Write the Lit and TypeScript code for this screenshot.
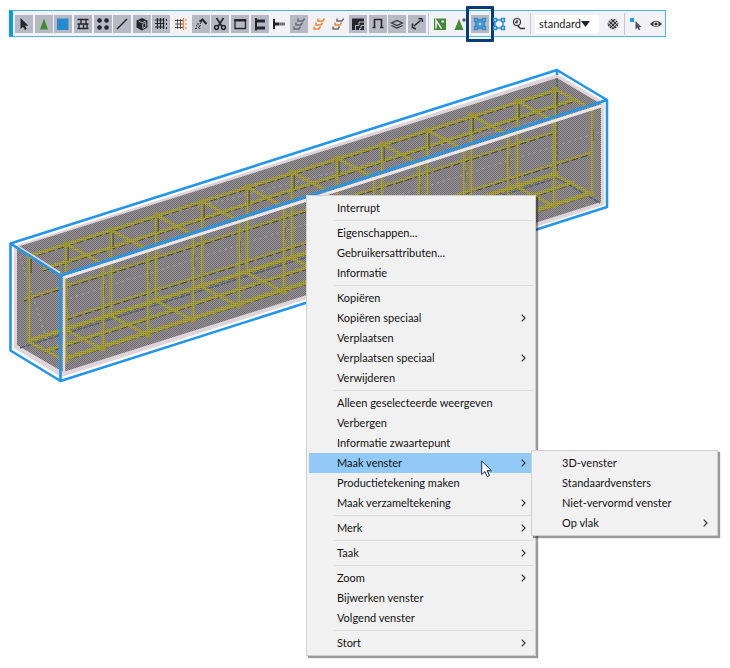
import { LitElement, html, svg, css, nothing } from "lit";
import { customElement } from "lit/decorators.js";
import { classMap } from "lit/directives/class-map.js";

interface Tool {
  label: string;
  icon: unknown;
  on?: boolean;
  marked?: boolean;
}

interface Entry {
  label: string;
  open?: boolean;
  more?: boolean;
  children?: Entry[];
}

const chainLinks = (top: string, middle: string, low: string) => svg`
  <g fill="none" stroke-width="1.5">
    <path d="M8 3.500v2.500h5l1.500-2.500" stroke=${top}/>
    <path d="M6 7.500v2.500h5l1.500-2.500" stroke=${middle}/>
    <path d="M4 11.500v2.500h5l1.500-2.500" stroke=${low}/>
  </g>`;

const nodeFrame = svg`
  <path d="M3.500 3.500h3v3h-3zM11.500 3.500h3v3h-3zM3.500 11.500h3v3h-3zM11.500 11.500h3v3h-3zM6.500 5h5M6.500 13h5M5 6.500v5M13 6.500v5" fill="none" stroke="#258bd0" stroke-width="1.400"/>`;

const mainTools: Tool[] = [
  { label: "Selecteren", on: true, icon: svg`<path d="M5.500 3v11l2.600-2.300 1.800 3.300 1.900-1-1.700-3.200 3.200-.4z" fill="#24262c"/>` },
  { label: "Componenten", on: true, icon: svg`<path d="M9 3.500l4 11H5z" fill="#438a35"/>` },
  { label: "Onderdelen", on: true, icon: svg`<path d="M3 3.500h11.500V15H3z" fill="#258bd0"/>` },
  { label: "Vlakken", on: true, icon: svg`<path d="M3.500 4.500h11M3.500 9h11M3.500 13.500h11M7 4.500V9M12 4.500V9M5 9v4.500M9.500 9v4.500M13 9v4.500" stroke="#24262c" stroke-width="1.400"/>` },
  { label: "Punten", on: true, icon: svg`<g fill="#24262c"><circle cx="5.500" cy="5.500" r="2.300"/><circle cx="12.500" cy="5.500" r="2.300"/><circle cx="5.500" cy="12.500" r="2.300"/><circle cx="12.500" cy="12.500" r="2.300"/></g>` },
  { label: "Lijnen", on: true, icon: svg`<path d="M4 14L14 4" stroke="#24262c" stroke-width="1.400"/>` },
  { label: "Volumes", on: true, icon: svg`<path d="M9 3l5.500 2.500v7L9 15.500l-5.500-3v-7z" fill="#24262c"/><path d="M5.500 6L9 7.700 12.800 6M9.800 9v4.500l3-1.800V7.500z" fill="none" stroke="#b6b9c4" stroke-width=".9"/>` },
  { label: "Stramien", on: true, icon: svg`<path d="M5.500 3v11M8.500 3v11M11.500 3v11M3 5h9.500M3 8.500h9.500M3 12h9.500" stroke="#24262c" stroke-width="1.200"/><path d="M14.500 4v11" stroke="#24262c" stroke-dasharray="2 2"/>` },
  { label: "Stramienlijn", icon: svg`<path d="M5.500 4v10M8.500 4v10M3 5.500h8M3 9h8M3 12.500h8" stroke="#4d4f58"/><path d="M11.500 3v12" stroke="#ef8536" stroke-width="1.400"/><path d="M14 4v10" stroke="#ef8536" stroke-dasharray="2 2"/>` },
  { label: "Lassen", on: true, icon: svg`<path d="M7.500 6.500L10.500 4.500 14.500 9" fill="none" stroke="#24262c" stroke-width="2"/><path d="M10 6L8 9M3 13.500h2M4 10.500l1.500.8M8.500 10l-2 2.500M6 8v2M8 14l-1-1.500" stroke="#24262c"/>` },
  { label: "Uitsnijdingen", on: true, icon: svg`<path d="M5.500 3L11 11.500M12.500 3L7 11.500" stroke="#24262c" stroke-width="1.700"/><g fill="none" stroke="#24262c" stroke-width="1.500"><circle cx="5.500" cy="12.500" r="1.900"/><circle cx="12.500" cy="12.500" r="1.900"/></g>` },
  { label: "Vensters", on: true, icon: svg`<path d="M4 5h10.500v8.500H4z" fill="none" stroke="#24262c" stroke-width="1.300"/><path d="M3.300 4h11.900v2.500H3.300z" fill="#24262c"/>` },
  { label: "Boutgroepen", on: true, icon: svg`<path d="M4 3h2v1.500h8v3H6v4h8v3H6v1H4z" fill="#24262c"/>` },
  { label: "Enkele bout", icon: svg`<path d="M3 4h2v3.500h4v3H5V14H3z" fill="#24262c"/><path d="M9.500 9H15" stroke="#24262c" stroke-width="3" stroke-dasharray="1.200 .8"/>` },
  { label: "Wapening", on: true, icon: chainLinks("#686b76", "#686b76", "#686b76") },
  { label: "Wapeningsgroep", icon: chainLinks("#ef8536", "#ef8536", "#ef8536") },
  { label: "Enkele staaf", icon: chainLinks("#686b76", "#ef8536", "#686b76") },
  { label: "Stortobjecten", on: true, icon: svg`<path d="M3 3.500h12v11.500H3z" fill="#24262c"/><path d="M6.500 15V10.500h3.500V7h5M10.500 15v-1.500h1.500V10.500h3" fill="none" stroke="#b6b9c4"/>` },
  { label: "Stortonderbreking", on: true, icon: svg`<path d="M5.500 13V4.500h7V13M3.500 12.500h3M11 12.500h3.500" fill="none" stroke="#24262c" stroke-width="1.600"/>` },
  { label: "Lagen", on: true, icon: svg`<path d="M3.500 8L9 5.500 14.500 8 9 10.500zM3.500 10.500L9 13l5.500-2.500" fill="none" stroke="#34363d" stroke-width="1.200"/>` },
  { label: "Afstanden", on: true, icon: svg`<path d="M6 11l6.500-5.500M4.500 8.500v4l3.500 1.500M10.500 3.500l3.500.5.500 3" fill="none" stroke="#24262c" stroke-width="1.500"/>` },
];

const viewTools: Tool[] = [
  { label: "Componentobjecten", icon: svg`<path d="M3 3.500h12v11.500H3z" fill="#438a35"/><path d="M5 13.500V5.500L10.500 13.500" fill="none" stroke="#f2f1f6" stroke-width="1.500"/><path d="M10.500 5.500h2.500v2h-2.500z" fill="#f2f1f6"/>` },
  { label: "Componentselectie", icon: svg`<path d="M8 4l4.500 11h-9z" fill="#438a35"/><circle cx="13" cy="5" r="1.700" fill="#555861"/>` },
  { label: "Merken", on: true, marked: true, icon: svg`${nodeFrame}<path d="M7 7h4v4H7zM3.500 9h3M11.500 9h3M9 3.500v3M9 11.500v3" fill="none" stroke="#258bd0"/>` },
  { label: "Objecten in merken", icon: nodeFrame },
  { label: "Taken", icon: svg`<circle cx="7" cy="7" r="3.500" fill="none" stroke="#34363d" stroke-width="1.200"/><path d="M7 5v2.500H5M7.500 10.500l3 3h4.500" fill="none" stroke="#34363d" stroke-width="1.500"/>` },
];

const netTool: Tool = {
  label: "Vangpunten",
  icon: svg`<circle cx="9" cy="9" r="5.500" fill="#b0b0b6"/><path d="M5 6l7 7M7 4l7 7M4 8.500l5.500 5.500M13 6l-7 7M11 4l-7 7M14 8.500L8.500 14" stroke="#34363d"/>`,
};

const endTools: Tool[] = [
  { label: "Slim selecteren", icon: svg`<path d="M3 3h4v4H3z" fill="#14a3e2"/><path d="M8.500 6v8.500l2-1.700 1.300 2.500 1.500-.8-1.200-2.300 2.400-.3z" fill="#555264"/>` },
  { label: "Zichtbaarheid", icon: svg`<path d="M3 9q6-6.500 12 0-6 6.500-12 0z" fill="#34363d"/><circle cx="9" cy="9" r="2.600" fill="#f2f1f6"/><circle cx="9" cy="9" r="1.600" fill="#34363d"/>` },
];

const menuGroups: Entry[][] = [
  [{ label: "Interrupt" }],
  [{ label: "Eigenschappen..." }, { label: "Gebruikersattributen..." }, { label: "Informatie" }],
  [
    { label: "Kopiëren" },
    { label: "Kopiëren speciaal", more: true },
    { label: "Verplaatsen" },
    { label: "Verplaatsen speciaal", more: true },
    { label: "Verwijderen" },
  ],
  [
    { label: "Alleen geselecteerde weergeven" },
    { label: "Verbergen" },
    { label: "Informatie zwaartepunt" },
    {
      label: "Maak venster",
      more: true,
      open: true,
      children: [
        { label: "3D-venster" },
        { label: "Standaardvensters" },
        { label: "Niet-vervormd venster" },
        { label: "Op vlak", more: true },
      ],
    },
    { label: "Productietekening maken" },
    { label: "Maak verzameltekening", more: true },
  ],
  [{ label: "Merk", more: true }],
  [{ label: "Taak", more: true }],
  [{ label: "Zoom", more: true }, { label: "Bijwerken venster" }, { label: "Volgend venster" }],
  [{ label: "Stort", more: true }],
];

@customElement("tool-strip")
export class ToolStrip extends LitElement {
  static styles = css`
    :host {
      display: flex;
      align-items: center;
      box-sizing: border-box;
      height: 27px;
      border: 1px solid #4ab6e8;
      border-left: 4px solid #0a9bd8;
      background: #f2f1f6;
      padding-left: 2px;
    }
    .group {
      display: flex;
      align-items: center;
      justify-content: space-between;
    }
    .main {
      flex: 1;
    }
    .view {
      width: 97px;
    }
    .end {
      width: 38px;
    }
    .divider {
      width: 1px;
      height: 22px;
      margin: 0 2px;
      background: #c6c6d0;
    }
    .tool {
      position: relative;
      display: block;
      width: 18px;
      height: 18px;
      padding: 0;
      border: 0;
      background: none;
    }
    .tool svg {
      display: block;
      width: 18px;
      height: 18px;
    }
    .on {
      background: #b6b9c4;
    }
    .marked::after {
      content: "";
      position: absolute;
      inset: -9px -5px;
      border: 3px solid #063c78;
      border-radius: 1px;
    }
    .choice {
      display: grid;
      align-items: center;
      width: 64px;
      height: 18px;
      background: #fff;
      margin: 0 5px 0 2px;
    }
    .choice select,
    .choice svg {
      grid-area: 1 / 1;
    }
    .choice select {
      appearance: none;
      width: 100%;
      height: 18px;
      padding: 0 0 0 4px;
      border: 0;
      background: none;
      color: #222;
      font: 11px/18px Lato, "Open Sans", sans-serif;
    }
    .choice svg {
      justify-self: end;
      width: 9px;
      height: 6px;
      margin-right: 9px;
      pointer-events: none;
    }
  `;

  tool(t: Tool) {
    return html`<button
      class=${classMap({ tool: true, on: !!t.on, marked: !!t.marked })}
      type="button"
      aria-label=${t.label}
      aria-pressed=${t.on ? "true" : "false"}
    ><svg viewBox="0 0 18 18" aria-hidden="true">${t.icon}</svg></button>`;
  }

  render() {
    return html`
      <div class="group main">${mainTools.map((t) => this.tool(t))}</div>
      <span class="divider"></span>
      <div class="group view">${viewTools.map((t) => this.tool(t))}</div>
      <span class="divider"></span>
      <label class="choice">
        <select aria-label="Selectiefilter"><option>standard</option></select>
        <svg viewBox="0 0 9 6" aria-hidden="true"><path d="M0 0h9L4.500 6z" fill="#222"/></svg>
      </label>
      ${this.tool(netTool)}
      <span class="divider"></span>
      <div class="group end">${endTools.map((t) => this.tool(t))}</div>
    `;
  }
}

const stirrups: [number, number][] = [
  [29, 256], [66, 244], [111, 230], [156, 215], [202, 201], [247, 187], [292, 172],
  [337, 158], [382, 144], [427, 130], [471, 115], [517, 101], [555, 89],
];

const longBars = [
  { d: "M29 256L556 90", w: 3 },
  { d: "M43 269L573 100", w: 3 },
  { d: "M24 299L556 131", w: 2 },
  { d: "M66 318L592 152", w: 2 },
  { d: "M28 341L558 173", w: 4 },
  { d: "M45 351L574 182", w: 3 },
  { d: "M63 359L588 194", w: 4 },
];

@customElement("beam-model")
export class BeamModel extends LitElement {
  static styles = css`
    :host,
    svg {
      display: block;
    }
  `;

  render() {
    return html`<svg width="612" height="320" viewBox="0 66 612 320" role="img" aria-label="Betonbalk met wapening">
      <defs>
        <pattern id="raster" width="2" height="2" patternUnits="userSpaceOnUse">
          <path d="M0 0h2v2H0z" fill="#979397"/>
          <path d="M0 0h1v1H0zM1 1h1v1H1z" fill="#706c70"/>
        </pattern>
        <pattern id="rust" width="2" height="2" patternUnits="userSpaceOnUse">
          <path d="M0 0h2v2H0z" fill="#a5a03c"/>
          <path d="M0 0h1v1H0z" fill="#858130"/>
        </pattern>
      </defs>
      <path d="M14 246L557 74 604 102V205L61 377 14 348z" fill="#ddd5da"/>
      <path d="M17 247L557 78 601 104V202L63 372 17 345z" fill="url(#raster)"/>
      <path d="M18 250L50 350M64 300L600 132M110 229L540 120" fill="none" stroke="#a5a3a8" stroke-width=".7" stroke-dasharray="3 3"/>
      <path d="M20 348L557 178L600 203M557 78V178" fill="none" stroke="#56606e" stroke-width="1.500" stroke-dasharray="5 1"/>
      ${longBars.map(
        (b) => svg`<path d=${b.d} transform="translate(0 2)" stroke="#4b4926" stroke-width="1" stroke-dasharray="7 3"/>
          <path d=${b.d} stroke="url(#rust)" stroke-width=${b.w}/>`,
      )}
      ${stirrups.map(
        ([x, y]) => svg`
          <path d="M${x + 2} ${y + 3}v14M${x + 38} ${y + 40}v12" stroke="#3f3d22" stroke-width="1"/>
          <path d="M${x} ${y}V${y + 86}L${x + 37} ${y + 105}V${y + 20}z" fill="none" stroke="url(#rust)" stroke-width="2.700" stroke-linejoin="round"/>
          <circle cx=${x} cy=${y} r="2.800" fill="#9a9534"/>
          <circle cx=${x + 37} cy=${y + 105} r="2.600" fill="#9a9534"/>`,
      )}
      <path d="M63 278L604 105" stroke="#ece6ea" stroke-width="3"/>
      <path d="M64 277V376M603 104V205M17 246L60 273M557 76L603 103" fill="none" stroke="#ded6db" stroke-width="2.500"/>
      <path d="M10.500 243.500L557 70 607 100V207L60.500 381 10.500 350.500zL60.500 275.500 607 100M60.500 275.500V381M557 70v5" fill="none" stroke="#2196ea" stroke-width="2.600" stroke-linejoin="round"/>
    </svg>`;
  }
}

@customElement("context-menu")
export class ContextMenu extends LitElement {
  static styles = css`
    :host {
      display: block;
      font: 11px/20px Lato, "Open Sans", sans-serif;
      color: #111;
    }
    .menu {
      list-style: none;
      margin: 0;
      padding: 2px;
      box-sizing: border-box;
      border: 1px solid #cfcfcf;
      background: #f1f1f1;
      box-shadow: 2px 2px 1px #00000066;
    }
    .top {
      width: 230px;
    }
    .row {
      position: relative;
    }
    .item {
      display: flex;
      align-items: center;
      justify-content: space-between;
      width: 100%;
      height: 20px;
      padding: 0 7px 0 28px;
      border: 0;
      background: none;
      color: inherit;
      font: inherit;
      text-align: left;
      white-space: nowrap;
    }
    .open {
      background: #91c9f7;
    }
    .arrow {
      width: 5px;
      height: 8px;
    }
    .line {
      height: 1px;
      margin: 2px 0 2px 25px;
      background: #dcdcdc;
    }
    .sub {
      position: absolute;
      z-index: 1;
      top: -3px;
      left: calc(100% - 2px);
      width: 187px;
    }
    .pointer {
      position: absolute;
      top: 7px;
      left: 172px;
      width: 12px;
      height: 18px;
      pointer-events: none;
    }
  `;

  entry(e: Entry): unknown {
    return html`<li class="row" role="none">
      <button class=${classMap({ item: true, open: !!e.open })} type="button" role="menuitem">
        <span>${e.label}</span>
        ${e.more
          ? html`<svg class="arrow" viewBox="0 0 5 8" aria-hidden="true"><path d="M.7.7L4 4 .7 7.300" fill="none" stroke="#333" stroke-width="1.200"/></svg>`
          : nothing}
      </button>
      ${e.children
        ? html`<svg class="pointer" viewBox="0 0 12 18" aria-hidden="true"><path d="M.7 1v13.500l3.200-2.900 2.300 5 2.200-1-2.200-4.900h4.300z" fill="#fff" stroke="#222b3a"/></svg>
            <ul class="menu sub" role="menu">${e.children.map((c) => this.entry(c))}</ul>`
        : nothing}
    </li>`;
  }

  render() {
    return html`<ul class="menu top" role="menu">
      ${menuGroups.map(
        (g, i) => html`${i ? html`<li class="line" role="separator"></li>` : nothing}${g.map((e) => this.entry(e))}`,
      )}
    </ul>`;
  }
}

@customElement("app-root")
export class AppRoot extends LitElement {
  static styles = css`
    :host {
      display: block;
      min-height: 100vh;
      box-sizing: border-box;
      padding-top: 10px;
      background: #fff;
    }
    .tools {
      width: 90%;
      margin-left: 9px;
    }
    .stage {
      position: relative;
      margin-top: 29px;
      min-height: 600px;
    }
    .menu {
      position: absolute;
      top: 129px;
      left: 306px;
    }
  `;

  render() {
    return html`
      <tool-strip class="tools" role="toolbar" aria-label="Selectiegereedschap"></tool-strip>
      <main class="stage">
        <beam-model></beam-model>
        <context-menu class="menu"></context-menu>
      </main>
    `;
  }
}
